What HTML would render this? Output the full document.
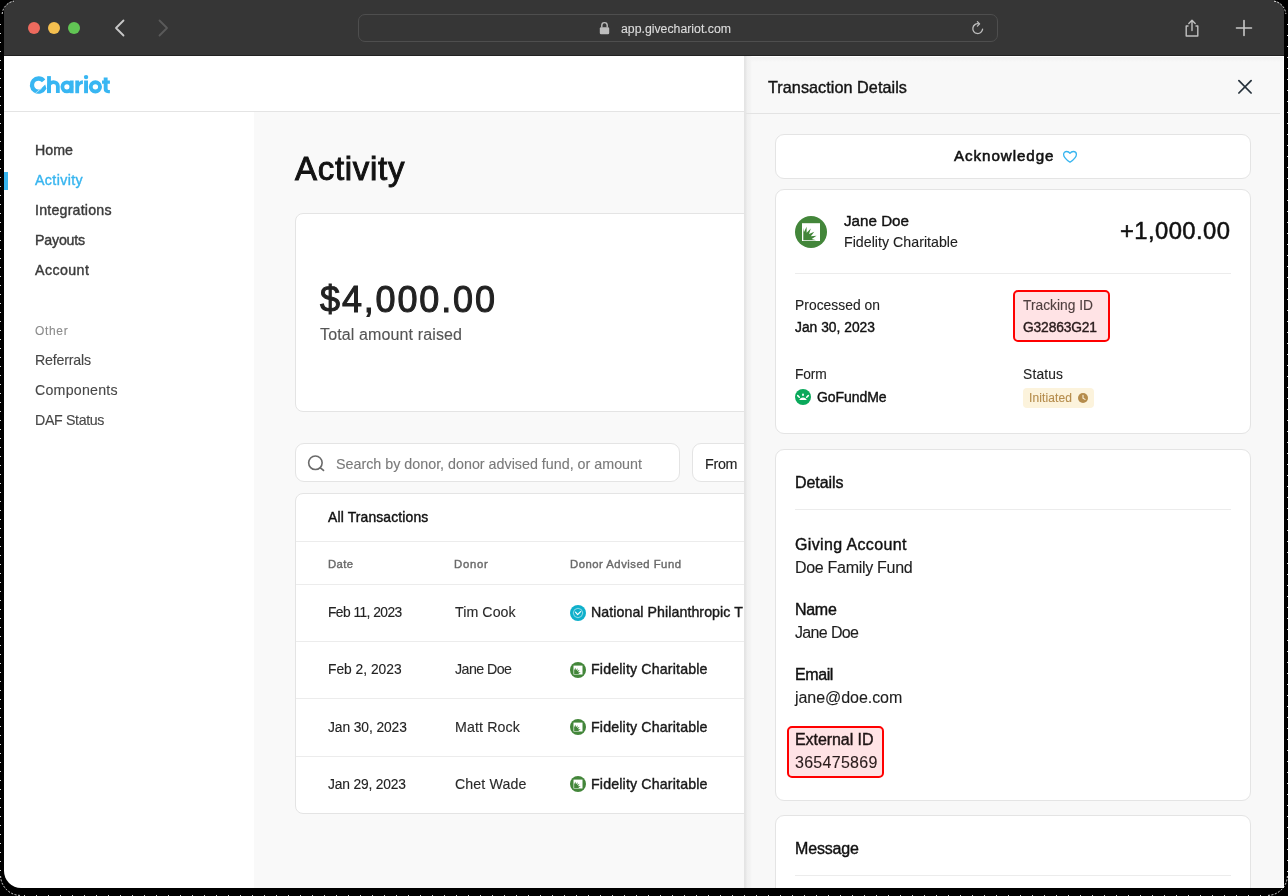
<!DOCTYPE html><html><head><meta charset="utf-8"><style>
*{margin:0;padding:0;box-sizing:border-box}
html,body{width:1288px;height:896px;overflow:hidden;background:#000}
body{font-family:"Liberation Sans",sans-serif;position:relative}
#frame{position:absolute;left:4px;top:0;width:1280px;height:888px;border-radius:12px 12px 0 17px;box-shadow:0 0 0 40px #000}
#win > *{}
.t{position:absolute;white-space:nowrap;will-change:transform}
#tb{position:absolute;left:0;top:0;width:1288px;height:56px;background:#363636;border-bottom:1px solid #222}
.dot{position:absolute;top:22px;width:12px;height:12px;border-radius:50%}
#addr{position:absolute;left:358px;top:14px;width:640px;height:28px;border:1px solid #4e4e4e;border-radius:7px}
#hdr{position:absolute;left:0;top:56px;width:1288px;height:56px;background:#fff;border-bottom:1px solid #e4e4e4}
#side{position:absolute;left:0;top:112px;width:254px;height:800px;background:#fff}
#main{position:absolute;left:254px;top:112px;width:500px;height:800px;background:#f9f9f9}
.card{position:absolute;background:#fff;border:1px solid #e4e4e4}
.hl{position:absolute;height:1px;background:#ececec}
#panel{position:absolute;left:744px;top:56px;width:540px;height:840px;background:linear-gradient(to bottom,#fff 0px,#fff 1px,#f1f1f1 1px,#f8f8f8 6px);border-right:1px solid #fff}
#pshadow{position:absolute;left:744px;top:56px;width:8px;height:840px;background:linear-gradient(to right,#e3e3e3 0px,#e7e7e7 2px,#f0f0f0 3px,#f3f3f3 6px,rgba(248,248,248,0) 8px)}
</style></head><body><div id="tb"></div>
<div class="dot" style="left:28px;background:#ed6a5e"></div><div class="dot" style="left:48px;background:#f4bf4f"></div><div class="dot" style="left:68px;background:#61c554"></div>
<svg style="position:absolute;left:110px;top:16px" width="20" height="24" viewBox="0 0 20 24"><path d="M13.5 4.5 L6 12 L13.5 19.5" fill="none" stroke="#c8c8c8" stroke-width="1.8" stroke-linecap="round" stroke-linejoin="round"/></svg>
<svg style="position:absolute;left:154px;top:16px" width="20" height="24" viewBox="0 0 20 24"><path d="M5.5 4.5 L13 12 L5.5 19.5" fill="none" stroke="#5a5a5a" stroke-width="1.8" stroke-linecap="round" stroke-linejoin="round"/></svg>
<div id="addr"></div>
<svg style="position:absolute;left:599px;top:21px" width="11" height="14" viewBox="0 0 11 14"><path d="M2.8 6.5 V4.3 a2.7 2.7 0 0 1 5.4 0 V6.5" fill="none" stroke="#bdbdbd" stroke-width="1.4"/><rect x="0.8" y="6.3" width="9.4" height="6.9" rx="1.3" fill="#bdbdbd"/></svg>
<div class="t" style="left:621.00px;top:23.31px;font-size:12.3px;line-height:12.3px;color:#dcdcdc;font-weight:400;letter-spacing:-0.004px;-webkit-text-stroke:0.12px currentColor;">app.givechariot.com</div>
<svg style="position:absolute;left:970px;top:20px" width="16" height="16" viewBox="0 0 16 16"><path d="M12.6 9.2 A4.9 4.9 0 1 1 8.6 3.8" fill="none" stroke="#bdbdbd" stroke-width="1.3" stroke-linecap="round"/><path d="M7.4 1.6 L9.6 3.9 L7.4 6.1" fill="none" stroke="#bdbdbd" stroke-width="1.3" stroke-linecap="round" stroke-linejoin="round"/></svg>
<svg style="position:absolute;left:1182px;top:18px" width="20" height="20" viewBox="0 0 20 20"><path d="M6.5 8 H4.2 V18 H15.8 V8 H13.5" fill="none" stroke="#c0c0c0" stroke-width="1.4" stroke-linejoin="round"/><path d="M10 12.5 V2.5 M6.8 5.5 L10 2.3 L13.2 5.5" fill="none" stroke="#c0c0c0" stroke-width="1.4" stroke-linecap="round" stroke-linejoin="round"/></svg>
<svg style="position:absolute;left:1234px;top:18px" width="20" height="20" viewBox="0 0 20 20"><path d="M10 2.5 V17.5 M2.5 10 H17.5" fill="none" stroke="#c8c8c8" stroke-width="1.6" stroke-linecap="round"/></svg>
<div id="hdr"></div>
<svg style="position:absolute;left:0;top:0" width="120" height="100" viewBox="0 0 120 100"><g fill="#38b6f2"><path d="M45.30 79.54 A8.75 8.75 0 1 0 46.43 88.75 L45.2 84.4 L41.15 88.56 A4.4 4.4 0 1 1 41.92 82.28 Z"/><rect x="47.1" y="76.1" width="3.8" height="17"/><path d="M48.95 93 V86 A4.45 3.9 0 0 1 57.85 86 V93" fill="none" stroke="#38b6f2" stroke-width="3.8"/><circle cx="66.9" cy="86.85" r="4.5" fill="none" stroke="#38b6f2" stroke-width="3.8"/><rect x="69.8" y="80.5" width="3.8" height="12.7"/><path d="M75.3 93.2 V80.5 H79.1 V82.2 C79.9 81 81.2 80.2 82.9 80.2 V84.1 C80.6 84.1 79.1 85.5 79.1 88 V93.2 Z"/><circle cx="86.05" cy="77.1" r="2.2"/><rect x="84.1" y="80.5" width="3.9" height="12.7"/><circle cx="95.4" cy="86.85" r="4.65" fill="none" stroke="#38b6f2" stroke-width="3.9"/><path d="M103.7 77.5 H107.6 V80.5 H109.9 V83.8 H107.6 V88.6 C107.6 89.6 108.1 90.1 109.1 90.1 H109.9 V93.2 H108.2 C105.2 93.2 103.7 91.7 103.7 88.8 V83.8 H102 V80.5 H103.7 Z"/></g><path d="M35.4 93.2 L38.8 90.6 L38.5 90.4 L41.6 88.6" fill="none" stroke="#fff" stroke-width="0.6"/></svg>
<div id="side"></div>
<div style="position:absolute;left:4px;top:172px;width:4px;height:18px;background:#38b5ef"></div>
<div class="t" style="left:35.00px;top:143.01px;font-size:14.2px;line-height:14.2px;color:#3b3b3b;font-weight:400;letter-spacing:0.040px;-webkit-text-stroke:0.40px currentColor;">Home</div>
<div class="t" style="left:35.00px;top:173.01px;font-size:14.2px;line-height:14.2px;color:#38b5ef;font-weight:400;letter-spacing:0.390px;-webkit-text-stroke:0.40px currentColor;">Activity</div>
<div class="t" style="left:35.00px;top:203.01px;font-size:14.2px;line-height:14.2px;color:#3b3b3b;font-weight:400;letter-spacing:0.218px;-webkit-text-stroke:0.40px currentColor;">Integrations</div>
<div class="t" style="left:35.00px;top:233.01px;font-size:14.2px;line-height:14.2px;color:#3b3b3b;font-weight:400;letter-spacing:-0.185px;-webkit-text-stroke:0.40px currentColor;">Payouts</div>
<div class="t" style="left:35.00px;top:263.01px;font-size:14.2px;line-height:14.2px;color:#3b3b3b;font-weight:400;letter-spacing:0.432px;-webkit-text-stroke:0.40px currentColor;">Account</div>
<div class="t" style="left:35.00px;top:325.32px;font-size:12px;line-height:12px;color:#8c8c8c;font-weight:400;letter-spacing:0.672px;-webkit-text-stroke:0.12px currentColor;">Other</div>
<div class="t" style="left:35.00px;top:352.81px;font-size:14.2px;line-height:14.2px;color:#474747;font-weight:400;letter-spacing:-0.176px;-webkit-text-stroke:0.12px currentColor;">Referrals</div>
<div class="t" style="left:35.00px;top:382.81px;font-size:14.2px;line-height:14.2px;color:#474747;font-weight:400;letter-spacing:0.243px;-webkit-text-stroke:0.12px currentColor;">Components</div>
<div class="t" style="left:35.00px;top:412.81px;font-size:14.2px;line-height:14.2px;color:#474747;font-weight:400;letter-spacing:-0.345px;-webkit-text-stroke:0.12px currentColor;">DAF Status</div>
<div id="main"></div>
<div class="t" style="left:295.00px;top:151.81px;font-size:33px;line-height:33px;color:#121212;font-weight:400;letter-spacing:0.698px;-webkit-text-stroke:0.73px currentColor;-webkit-text-stroke:0.95px #121212;">Activity</div>
<div class="card" style="left:295px;top:213px;width:600px;height:199px;border-radius:8px"></div>
<div class="t" style="left:320.00px;top:281.51px;font-size:36px;line-height:36px;color:#222;font-weight:400;letter-spacing:1.856px;-webkit-text-stroke:0.79px currentColor;-webkit-text-stroke:1px #222;">$4,000.00</div>
<div class="t" style="left:320.00px;top:327.00px;font-size:16px;line-height:16px;color:#555;font-weight:400;letter-spacing:0.131px;-webkit-text-stroke:0.12px currentColor;">Total amount raised</div>
<div class="card" style="left:295px;top:443px;width:385px;height:39px;border-radius:9px"></div>
<svg style="position:absolute;left:306px;top:454px" width="20" height="20" viewBox="0 0 20 20"><circle cx="9.4" cy="8.8" r="6.75" fill="none" stroke="#6a6a6a" stroke-width="1.6"/><path d="M14.4 13.8 L17.5 16.4" stroke="#6a6a6a" stroke-width="1.7" stroke-linecap="round"/></svg>
<div class="t" style="left:336.40px;top:456.90px;font-size:14.3px;line-height:14.3px;color:#7a7a7a;font-weight:400;letter-spacing:-0.001px;-webkit-text-stroke:0.12px currentColor;">Search by donor, donor advised fund, or amount</div>
<div class="card" style="left:692px;top:443px;width:200px;height:39px;border-radius:9px"></div>
<div class="t" style="left:705.00px;top:457.00px;font-size:14.3px;line-height:14.3px;color:#222;font-weight:400;letter-spacing:-0.287px;-webkit-text-stroke:0.12px currentColor;">From</div>
<div class="card" style="left:295px;top:493px;width:600px;height:321px;border-radius:8px"></div>
<div class="t" style="left:327.50px;top:510.91px;font-size:13.9px;line-height:13.9px;color:#111;font-weight:400;letter-spacing:0.146px;-webkit-text-stroke:0.40px currentColor;">All Transactions</div>
<div class="hl" style="left:296px;top:541px;width:500px"></div>
<div class="t" style="left:327.50px;top:559.32px;font-size:11.3px;line-height:11.3px;color:#6a6a6a;font-weight:400;letter-spacing:0.377px;-webkit-text-stroke:0.40px currentColor;">Date</div>
<div class="t" style="left:454.40px;top:559.32px;font-size:11.3px;line-height:11.3px;color:#6a6a6a;font-weight:400;letter-spacing:0.731px;-webkit-text-stroke:0.40px currentColor;">Donor</div>
<div class="t" style="left:570.40px;top:559.32px;font-size:11.3px;line-height:11.3px;color:#6a6a6a;font-weight:400;letter-spacing:0.506px;-webkit-text-stroke:0.40px currentColor;">Donor Advised Fund</div>
<div class="hl" style="left:296px;top:584px;width:500px"></div>
<div class="t" style="left:327.50px;top:606.01px;font-size:13.8px;line-height:13.8px;color:#222;font-weight:400;letter-spacing:-0.555px;-webkit-text-stroke:0.12px currentColor;">Feb 11, 2023</div>
<div class="t" style="left:454.50px;top:605.01px;font-size:14.2px;line-height:14.2px;color:#2a2a2a;font-weight:400;letter-spacing:0.068px;-webkit-text-stroke:0.12px currentColor;">Tim Cook</div>
<svg style="position:absolute;left:570px;top:604.5px" width="16" height="16" viewBox="0 0 16 16"><circle cx="8" cy="8" r="8" fill="#0fb0cb"/><path d="M8 3.2 L11.4 4.6 L12.8 8 L11.4 11.4 L8 12.8 L4.6 11.4 L3.2 8 L4.6 4.6 Z" fill="none" stroke="#9fe0ea" stroke-width="0.9"/><path d="M5.5 7.2 L7.6 9.6 L10.6 6.6" fill="none" stroke="#fff" stroke-width="1.2" stroke-linecap="round" stroke-linejoin="round"/></svg>
<div class="t" style="left:591.40px;top:605.01px;font-size:14.2px;line-height:14.2px;color:#1a1a1a;font-weight:400;letter-spacing:0.065px;-webkit-text-stroke:0.40px currentColor;">National Philanthropic T</div>
<div class="t" style="left:327.50px;top:663.20px;font-size:13.8px;line-height:13.8px;color:#222;font-weight:400;letter-spacing:-0.006px;-webkit-text-stroke:0.12px currentColor;">Feb 2, 2023</div>
<div class="t" style="left:454.50px;top:662.21px;font-size:14.2px;line-height:14.2px;color:#2a2a2a;font-weight:400;letter-spacing:-0.541px;-webkit-text-stroke:0.12px currentColor;">Jane Doe</div>
<svg style="position:absolute;left:570px;top:661.7px" width="16" height="16" viewBox="0 0 16 16"><circle cx="8" cy="8" r="8" fill="#43863a"/><rect x="3.5" y="3.6" width="9" height="8.9" fill="#fff"/><path d="M4.15 12.10 L4.15 5.90 L4.50 8.01 L5.80 5.43 L5.83 8.31 L7.91 6.30 L7.02 9.06 L9.65 7.85 L7.89 10.16 L10.77 9.90 L8.34 11.46 L10.50 12.15 L10.00 12.10 Z" fill="#43863a"/></svg>
<div class="t" style="left:591.40px;top:662.21px;font-size:14.2px;line-height:14.2px;color:#1a1a1a;font-weight:400;letter-spacing:0.164px;-webkit-text-stroke:0.40px currentColor;">Fidelity Charitable</div>
<div class="t" style="left:327.50px;top:720.90px;font-size:13.8px;line-height:13.8px;color:#222;font-weight:400;letter-spacing:-0.082px;-webkit-text-stroke:0.12px currentColor;">Jan 30, 2023</div>
<div class="t" style="left:454.50px;top:719.90px;font-size:14.2px;line-height:14.2px;color:#2a2a2a;font-weight:400;letter-spacing:0.136px;-webkit-text-stroke:0.12px currentColor;">Matt Rock</div>
<svg style="position:absolute;left:570px;top:719.4px" width="16" height="16" viewBox="0 0 16 16"><circle cx="8" cy="8" r="8" fill="#43863a"/><rect x="3.5" y="3.6" width="9" height="8.9" fill="#fff"/><path d="M4.15 12.10 L4.15 5.90 L4.50 8.01 L5.80 5.43 L5.83 8.31 L7.91 6.30 L7.02 9.06 L9.65 7.85 L7.89 10.16 L10.77 9.90 L8.34 11.46 L10.50 12.15 L10.00 12.10 Z" fill="#43863a"/></svg>
<div class="t" style="left:591.40px;top:719.90px;font-size:14.2px;line-height:14.2px;color:#1a1a1a;font-weight:400;letter-spacing:0.164px;-webkit-text-stroke:0.40px currentColor;">Fidelity Charitable</div>
<div class="t" style="left:327.50px;top:777.90px;font-size:13.8px;line-height:13.8px;color:#222;font-weight:400;letter-spacing:-0.164px;-webkit-text-stroke:0.12px currentColor;">Jan 29, 2023</div>
<div class="t" style="left:454.50px;top:776.90px;font-size:14.2px;line-height:14.2px;color:#2a2a2a;font-weight:400;letter-spacing:0.112px;-webkit-text-stroke:0.12px currentColor;">Chet Wade</div>
<svg style="position:absolute;left:570px;top:776.4px" width="16" height="16" viewBox="0 0 16 16"><circle cx="8" cy="8" r="8" fill="#43863a"/><rect x="3.5" y="3.6" width="9" height="8.9" fill="#fff"/><path d="M4.15 12.10 L4.15 5.90 L4.50 8.01 L5.80 5.43 L5.83 8.31 L7.91 6.30 L7.02 9.06 L9.65 7.85 L7.89 10.16 L10.77 9.90 L8.34 11.46 L10.50 12.15 L10.00 12.10 Z" fill="#43863a"/></svg>
<div class="t" style="left:591.40px;top:776.90px;font-size:14.2px;line-height:14.2px;color:#1a1a1a;font-weight:400;letter-spacing:0.164px;-webkit-text-stroke:0.40px currentColor;">Fidelity Charitable</div>
<div class="hl" style="left:296px;top:641px;width:500px"></div>
<div class="hl" style="left:296px;top:698px;width:500px"></div>
<div class="hl" style="left:296px;top:756px;width:500px"></div>
<div id="panel"></div><div id="pshadow"></div>
<div class="t" style="left:768.00px;top:78.81px;font-size:16.2px;line-height:16.2px;color:#141414;font-weight:400;letter-spacing:0.052px;-webkit-text-stroke:0.40px currentColor;">Transaction Details</div>
<svg style="position:absolute;left:1236px;top:78px" width="18" height="18" viewBox="0 0 18 18"><path d="M2.9 2.6 L15.1 15 M15.1 2.6 L2.9 15" stroke="#27323c" stroke-width="1.75" stroke-linecap="round"/></svg>
<div class="hl" style="left:746px;top:113px;width:534px;background:#e3e3e3"></div>
<div class="card" style="left:775px;top:134px;width:476px;height:45px;border-radius:9px"></div>
<div class="t" style="left:954.00px;top:147.81px;font-size:15.2px;line-height:15.2px;color:#111;font-weight:400;letter-spacing:0.909px;-webkit-text-stroke:0.40px currentColor;-webkit-text-stroke:0.55px #111;">Acknowledge</div>
<svg style="position:absolute;left:1062px;top:149px" width="16" height="16" viewBox="0 0 16 16"><path d="M8 13.2 C4.2 10.6 1.6 8.4 1.6 5.4 C1.6 3.5 3 2.5 4.7 2.5 C6.1 2.5 7.3 3.2 8 4.3 C8.7 3.2 9.9 2.5 11.3 2.5 C13 2.5 14.4 3.5 14.4 5.4 C14.4 8.4 11.8 10.6 8 13.2 Z" fill="none" stroke="#38b5ef" stroke-width="1.3" stroke-linejoin="round"/></svg>
<div class="card" style="left:775px;top:189px;width:476px;height:245px;border-radius:9px"></div>
<svg style="position:absolute;left:795px;top:216px" width="32" height="32" viewBox="0 0 32 32"><circle cx="16" cy="16" r="16" fill="#43863a"/><rect x="7" y="7.2" width="18" height="17.8" fill="#fff"/><path d="M8.30 24.20 L8.30 11.80 L8.99 16.01 L11.60 10.85 L11.66 16.63 L15.81 12.60 L14.04 18.12 L19.30 15.71 L15.79 20.33 L21.55 19.81 L16.68 22.92 L21.00 24.30 L20.00 24.20 Z" fill="#43863a"/></svg>
<div class="t" style="left:844.00px;top:213.01px;font-size:15.2px;line-height:15.2px;color:#111;font-weight:400;letter-spacing:0.000px;-webkit-text-stroke:0.40px currentColor;">Jane Doe</div>
<div class="t" style="left:844.00px;top:235.10px;font-size:14.2px;line-height:14.2px;color:#1e1e1e;font-weight:400;letter-spacing:0.019px;-webkit-text-stroke:0.12px currentColor;">Fidelity Charitable</div>
<div class="t" style="left:1120.20px;top:218.90px;font-size:23.8px;line-height:23.8px;color:#111;font-weight:400;letter-spacing:0.432px;-webkit-text-stroke:0.52px currentColor;">+1,000.00</div>
<div class="hl" style="left:795px;top:273px;width:436px"></div>
<div class="t" style="left:795.40px;top:299.11px;font-size:13.8px;line-height:13.8px;color:#222;font-weight:400;letter-spacing:0.056px;-webkit-text-stroke:0.12px currentColor;">Processed on</div>
<div class="t" style="left:795.40px;top:320.81px;font-size:13.8px;line-height:13.8px;color:#111;font-weight:400;letter-spacing:0.018px;-webkit-text-stroke:0.40px currentColor;">Jan 30, 2023</div>
<div style="position:absolute;left:1013px;top:290px;width:97px;height:52px;box-sizing:border-box;border:2px solid #ff0000;border-radius:5px;background:#ffe3e5"></div>
<div class="t" style="left:1023.10px;top:298.70px;font-size:13.8px;line-height:13.8px;color:#4f3f3f;font-weight:400;letter-spacing:-0.004px;-webkit-text-stroke:0.12px currentColor;">Tracking ID</div>
<div class="t" style="left:1023.10px;top:320.70px;font-size:13.8px;line-height:13.8px;color:#2a1c1c;font-weight:400;letter-spacing:-0.149px;-webkit-text-stroke:0.40px currentColor;">G32863G21</div>
<div class="t" style="left:795.40px;top:368.01px;font-size:13.8px;line-height:13.8px;color:#222;font-weight:400;letter-spacing:-0.165px;-webkit-text-stroke:0.12px currentColor;">Form</div>
<svg style="position:absolute;left:795px;top:389px" width="16" height="16" viewBox="0 0 16 16"><circle cx="8" cy="8" r="8" fill="#0aa95b"/><path d="M4.2 11 C5.1 9.1 6.4 8.4 8 8.4 C9.6 8.4 10.9 9.1 11.8 11 Z" fill="#fff"/><rect x="7.15" y="4.4" width="1.7" height="2.6" rx="0.8" fill="#fff"/><path d="M2.7 6.6 L4.3 8.2 M13.3 6.6 L11.7 8.2" stroke="#fff" stroke-width="1.5" stroke-linecap="round"/></svg>
<div class="t" style="left:816.50px;top:389.60px;font-size:14px;line-height:14px;color:#111;font-weight:400;letter-spacing:-0.062px;-webkit-text-stroke:0.40px currentColor;">GoFundMe</div>
<div class="t" style="left:1023.10px;top:367.61px;font-size:13.8px;line-height:13.8px;color:#222;font-weight:400;letter-spacing:0.175px;-webkit-text-stroke:0.12px currentColor;">Status</div>
<div style="position:absolute;left:1023px;top:388px;width:71px;height:20px;border-radius:4px;background:#fcf3dc"></div>
<div class="t" style="left:1029.40px;top:391.82px;font-size:12px;line-height:12px;color:#b58c4c;font-weight:400;letter-spacing:0.121px;-webkit-text-stroke:0.12px currentColor;">Initiated</div>
<svg style="position:absolute;left:1078px;top:393px" width="10" height="10" viewBox="0 0 10 10"><circle cx="5" cy="5" r="5" fill="#b58c4c"/><path d="M5 2.3 V5.2 L7 6.4" fill="none" stroke="#fcf3dc" stroke-width="1.1" stroke-linecap="round"/></svg>
<div class="card" style="left:775px;top:449px;width:476px;height:352px;border-radius:9px"></div>
<div class="t" style="left:795.40px;top:475.00px;font-size:16px;line-height:16px;color:#111;font-weight:400;letter-spacing:-0.068px;-webkit-text-stroke:0.40px currentColor;">Details</div>
<div class="hl" style="left:795px;top:509px;width:436px"></div>
<div class="t" style="left:795.40px;top:536.70px;font-size:16px;line-height:16px;color:#111;font-weight:400;letter-spacing:0.359px;-webkit-text-stroke:0.40px currentColor;">Giving Account</div>
<div class="t" style="left:795.40px;top:559.50px;font-size:16px;line-height:16px;color:#1e1e1e;font-weight:400;letter-spacing:-0.294px;-webkit-text-stroke:0.12px currentColor;">Doe Family Fund</div>
<div class="t" style="left:795.40px;top:602.11px;font-size:16px;line-height:16px;color:#111;font-weight:400;letter-spacing:-0.293px;-webkit-text-stroke:0.40px currentColor;">Name</div>
<div class="t" style="left:795.40px;top:624.81px;font-size:16px;line-height:16px;color:#1e1e1e;font-weight:400;letter-spacing:-0.642px;-webkit-text-stroke:0.12px currentColor;">Jane Doe</div>
<div class="t" style="left:795.40px;top:666.61px;font-size:16px;line-height:16px;color:#111;font-weight:400;letter-spacing:-0.402px;-webkit-text-stroke:0.40px currentColor;">Email</div>
<div class="t" style="left:795.40px;top:689.50px;font-size:16px;line-height:16px;color:#1e1e1e;font-weight:400;letter-spacing:-0.051px;-webkit-text-stroke:0.12px currentColor;">jane@doe.com</div>
<div style="position:absolute;left:787px;top:726px;width:97px;height:52px;box-sizing:border-box;border:2px solid #ff0000;border-radius:5px;background:#ffe3e5"></div>
<div class="t" style="left:795.40px;top:732.40px;font-size:16px;line-height:16px;color:#1e1414;font-weight:400;letter-spacing:-0.064px;-webkit-text-stroke:0.40px currentColor;">External ID</div>
<div class="t" style="left:795.40px;top:755.20px;font-size:16px;line-height:16px;color:#2a1c1c;font-weight:400;letter-spacing:0.277px;-webkit-text-stroke:0.12px currentColor;">365475869</div>
<div class="card" style="left:775px;top:815px;width:476px;height:200px;border-radius:9px"></div>
<div class="t" style="left:795.40px;top:841.20px;font-size:16px;line-height:16px;color:#111;font-weight:400;letter-spacing:-0.154px;-webkit-text-stroke:0.40px currentColor;">Message</div>
<div class="hl" style="left:795px;top:875px;width:436px"></div>
<div id="frame"></div><svg style="position:absolute;left:0;top:0" width="1288" height="896" viewBox="0 0 1288 896"><g fill="none" stroke="rgba(255,255,255,.85)" stroke-width="1" stroke-dasharray="2 1.5"><path d="M2.2 14 A14 14 0 0 1 14 1.2"/><path d="M1274 1.2 A14 14 0 0 1 1285.8 14"/><path d="M0.6 876 A20 20 0 0 0 20 895.4"/><path d="M1268 895.4 A20 20 0 0 0 1287.4 876"/></g></svg><div style="position:absolute;left:0;top:24px;width:1px;height:850px;background:repeating-linear-gradient(to bottom,rgba(255,255,255,.85) 0 1px,transparent 1px 9px)"></div><div style="position:absolute;left:1287px;top:24px;width:1px;height:850px;background:repeating-linear-gradient(to bottom,rgba(255,255,255,.85) 0 1px,transparent 1px 11px)"></div><div style="position:absolute;left:24px;top:895px;width:1240px;height:1px;background:repeating-linear-gradient(to right,rgba(255,255,255,.85) 0 1px,transparent 1px 12px)"></div></body></html>
